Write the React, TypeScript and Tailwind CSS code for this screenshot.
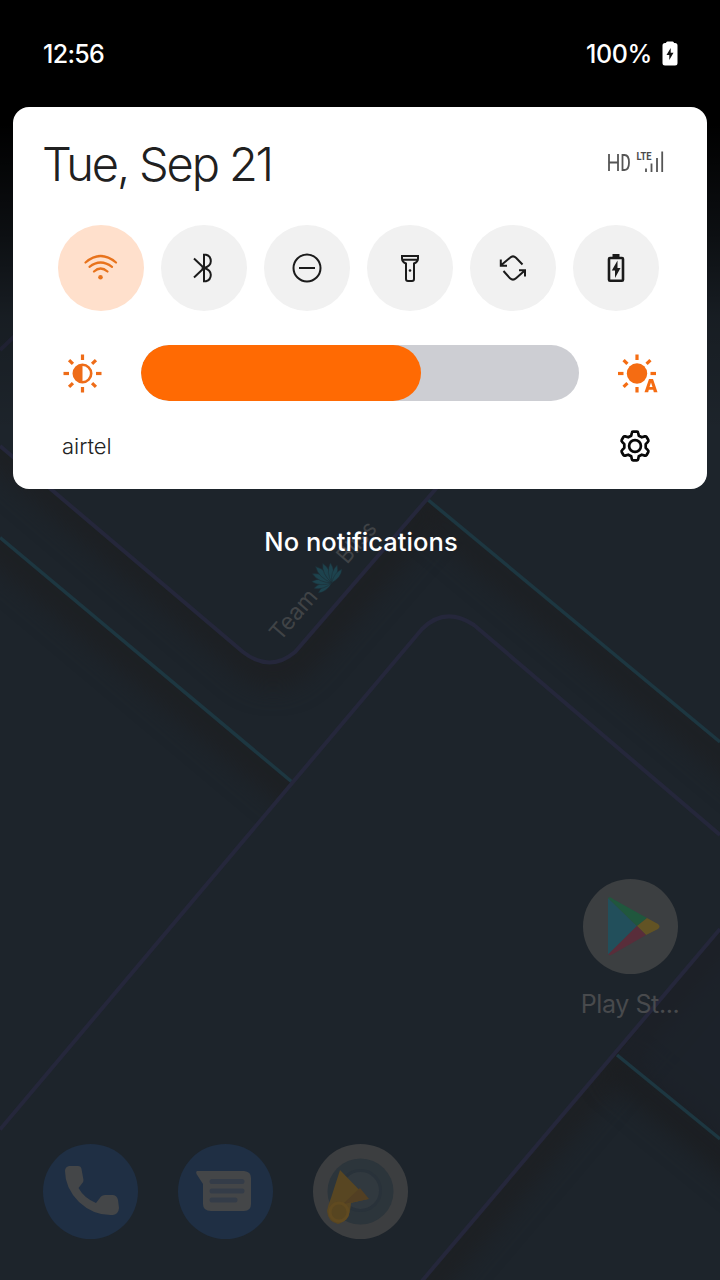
import React from "react";

const FONT = "font-['Inter','Open_Sans',sans-serif]";

function Wallpaper() {
  return (
    <svg className="absolute inset-0 h-full w-full" viewBox="0 0 720 1280" fill="none">
      <defs>
        <filter id="soft" x="-30%" y="-30%" width="160%" height="160%" colorInterpolationFilters="sRGB">
          <feGaussianBlur stdDeviation="13" />
        </filter>
        <linearGradient id="fade" x1="0" y1="0" x2="0" y2="1">
          <stop offset="0" stopColor="#000" />
          <stop offset="0.26" stopColor="#000" />
          <stop offset="0.48" stopColor="#000" stopOpacity="0.6" />
          <stop offset="0.66" stopColor="#000" stopOpacity="0.2" />
          <stop offset="0.9" stopColor="#000" stopOpacity="0" />
        </linearGradient>
        <clipPath id="leftBand"><path d="M0 537L292 782L0 1129Z" /></clipPath>
        <clipPath id="lowerRight"><path d="M720 929L422 1280H720Z" /></clipPath>
        <clipPath id="upper"><path d="M0 300H720V834L473 625Q450 605 422 628L292 782L0 537Z" /></clipPath>
      </defs>
      <rect width="720" height="1280" fill="#1d242b" />
      <g clipPath="url(#upper)">
        <path d="M-60 395L248 656Q271 673 294 653L440 486" stroke="#1d1f22" strokeWidth="30" filter="url(#soft)" transform="translate(4 8)" />
        <path d="M427 499L780 793" stroke="#1d1f22" strokeWidth="26" filter="url(#soft)" transform="translate(-4 8)" />
        <path d="M0 446L248 656Q271 673 294 653L440 486V300H0Z" fill="#1d242b" />
        <path d="M427 499L720 743V300H600Z" fill="#1d242b" />
      </g>
      <g clipPath="url(#leftBand)">
        <path d="M-60 487L330 814" stroke="#1d1f22" strokeWidth="30" filter="url(#soft)" transform="translate(-2 8)" />
      </g>
      <g clipPath="url(#lowerRight)">
        <path d="M770 870L382 1327" stroke="#1d1f22" strokeWidth="28" filter="url(#soft)" transform="translate(5 5)" />
        <path d="M617 1055L770 1180" stroke="#1b1d20" strokeWidth="28" filter="url(#soft)" transform="translate(-4 10)" />
        <path d="M617 1055L720 1139V929Z" fill="#1d222a" fillOpacity="0.6" />
      </g>
      <g stroke="#1d3741" strokeWidth="3.5">
        <path d="M0 537.500L292 782" />
        <path d="M427 499L720 742" />
        <path d="M617 1055L720 1139" />
      </g>
      <g stroke="#25273b" strokeWidth="4">
        <path d="M0 350L40 312" />
        <path d="M0 446L243 652Q270 673 295 652L440 484" />
        <path d="M0 1129.500L422 629Q445 606 474 625L720 835" />
        <path d="M720 929L422 1281" />
      </g>
      <g transform="translate(324 575)" fill="#1d434e">
        <g transform="rotate(-45) translate(0 11)">
          {[-82, -62, -41, -20, 0, 20, 41, 62, 82].map((a) => (
            <path key={a} d="M0 0Q-6 -13 0 -23Q6 -13 0 0Z" transform={`rotate(${a}) scale(${1 - Math.abs(a) / 320})`} stroke="#1d2c34" strokeWidth="0.600" />
          ))}
        </g>
      </g>
      <g className="font-['Inter',sans-serif]" fill="#404346" fontSize="23">
        <text transform="translate(280 642) rotate(-49)" textLength="59" lengthAdjust="spacingAndGlyphs">Team</text>
        <text transform="translate(347 565) rotate(-49)" textLength="47" lengthAdjust="spacingAndGlyphs">Bliss</text>
      </g>
      <rect width="720" height="480" fill="url(#fade)" />
    </svg>
  );
}

function Tile({ active, children }: { active?: boolean; children: React.ReactNode }) {
  return (
    <button className={`flex size-[86px] items-center justify-center rounded-full ${active ? "bg-[#ffe0cc] text-[#e8731c]" : "bg-[#f1f1f1] text-[#1b1b1b]"}`}>
      <svg className="size-[86px]" viewBox="0 0 86 86" fill="none" stroke="currentColor" strokeWidth="2">
        {children}
      </svg>
    </button>
  );
}

function Rays({ skip }: { skip?: number }) {
  return (
    <g fill="currentColor">
      {[0, 45, 90, 135, 180, 225, 270, 315].filter((a) => a !== skip).map((a) => (
        <rect key={a} x="-1.600" y="-19" width="3.200" height="5.500" transform={`rotate(${a})`} />
      ))}
    </g>
  );
}

function QuickSettings() {
  return (
    <section className="flex h-[382px] flex-col rounded-[16px] bg-white">
      <header className="flex h-[118px] items-center justify-between pr-[43px] pb-[4px] pl-[29px]">
        <h1 className="text-[47px] font-[330] tracking-[-2.150px] whitespace-nowrap text-[#202020]">Tue, Sep 21</h1>
        <svg className="mb-[4px] h-[30px] w-[58px]" viewBox="0 0 58 30">
          <g fill="none" stroke="#555" strokeWidth="1.800">
            <path d="M3 7V24M12 7V24M3 15.500H12M16.500 8V23H18.500Q23 23 23 15.500Q23 8 18.500 8Z" />
            <path d="M40 21.500V25M45.500 16.500V25M51 11V25M56.200 4.500V25" />
          </g>
          <text x="30.500" y="13" fontSize="11.500" fontWeight="700" textLength="15" lengthAdjust="spacingAndGlyphs" fill="#4b4b4b" className="font-['Roboto',sans-serif]">LTE</text>
        </svg>
      </header>
      <div className="flex justify-between pr-[48px] pl-[45px]">
        <Tile active>
          <g strokeWidth="2.200" strokeLinecap="round">
            <path d="M27.500 37.500Q42.500 24.500 58 37.500M31.500 41.800Q42.500 33.200 54 41.800M36 46.500Q42.500 40.500 49.500 46.500" />
            <circle cx="42.500" cy="52.300" r="2.300" fill="currentColor" stroke="none" />
          </g>
        </Tile>
        <Tile>
          <path d="M33 33.500L43 43L33 52.500M43 29.800V56.200H45Q49.800 55 49.800 49.800Q49.800 45 43 43Q49.800 41 49.800 36.200Q49.800 31 45 29.800Z" />
        </Tile>
        <Tile>
          <circle cx="43" cy="43" r="13.500" /><path d="M35 43H51" />
        </Tile>
        <Tile>
          <path d="M35 31H51V33.500Q51 37 47 38.500V54Q47 56 45 56H41Q39 56 39 54V38.500Q35 37 35 33.500ZM35.500 34.800H50.500" />
          <circle cx="43" cy="45.500" r="1.300" fill="currentColor" stroke="none" />
        </Tile>
        <Tile>
          <path d="M30.800 34.500V40.700H37M31 40.200L40 32.700Q43 30 46 32.700L52.500 39.500M55 51.500V45.300H49M54.500 45.800L46 53.300Q43 56 40 53.300L33.500 46" />
        </Tile>
        <Tile>
          <rect x="36" y="33" width="14" height="22.800" rx="1" strokeWidth="2.600" />
          <path d="M39.500 29H46.500V33H39.500Z" fill="currentColor" stroke="none" />
          <path d="M44.500 35.500L38.800 45.500H42V53L47.500 43H44.500Z" fill="currentColor" stroke="none" />
        </Tile>
      </div>
      <div className="mt-[34px] flex h-[56px] items-center pl-[50px]">
        <svg className="size-[40px] text-[#ee6c18]" viewBox="-19.500 -20.500 40 40">
          <Rays />
          <circle r="8.700" fill="none" stroke="currentColor" strokeWidth="2.600" />
          <path d="M0 -9A9 9 0 0 0 0 9Z" fill="currentColor" />
        </svg>
        <div className="ml-[38px] h-[56px] w-[438px] overflow-hidden rounded-full bg-[#cdced3]">
          <div className="h-full w-[280px] rounded-full bg-[#ff6a03]" />
        </div>
        <svg className="ml-[38px] size-[44px] text-[#f56c12]" viewBox="-20 -22.500 44 44">
          <Rays skip={135} />
          <circle r="10.200" fill="currentColor" />
          <path d="M4 20L11 4H17L22 20Z" fill="#fff" />
          <path fillRule="evenodd" d="M7.500 18.800L12 5.500H16L20.500 18.800H16.800L16.200 16.300H11.800L11.200 18.800ZM12.500 13.500H15.500L14 9Z" fill="currentColor" />
        </svg>
      </div>
      <footer className="mt-[22px] flex h-[46px] items-center justify-between pr-[54px] pl-[49px]">
        <span className="text-[22px] font-[350] text-[#222]">airtel</span>
        <svg className="size-[36px]" viewBox="-18 -18 36 36" fill="none" stroke="#080808" strokeWidth="2.700" strokeLinejoin="round">
          <circle r="5.900" />
          <path d="M-2 -14.300H2Q3 -14.300 3.200 -13L3.800 -10.300L6.800 -8.700L9.800 -9.600Q11 -9.900 11.600 -9L13.300 -6Q13.800 -5 12.900 -4.200L10.700 -1.800V1.800L12.900 4.200Q13.800 5 13.300 6L11.600 9Q11 9.900 9.800 9.600L6.800 8.700L3.800 10.300L3.200 13Q3 14.300 2 14.300H-2Q-3 14.300 -3.200 13L-3.800 10.300L-6.800 8.700L-9.800 9.600Q-11 9.900 -11.600 9L-13.300 6Q-13.800 5 -12.900 4.200L-10.700 1.800V-1.800L-12.900 -4.200Q-13.800 -5 -13.300 -6L-11.600 -9Q-11 -9.900 -9.800 -9.600L-6.800 -8.700L-3.800 -10.300L-3.200 -13Q-3 -14.300 -2 -14.300Z" />
        </svg>
      </footer>
    </section>
  );
}

function PlayStore() {
  return (
    <div className="flex w-[120px] flex-col items-center">
      <svg className="size-[95px]" viewBox="0 0 95 95">
        <circle cx="47.500" cy="47.500" r="47.500" fill="#3c3f41" />
        <path d="M25 19V76L54 47Z" fill="#224f5b" />
        <path d="M25 19Q27 17 30 20L64 39L54 47Z" fill="#20573d" />
        <path d="M64 39L75 45Q78 47.500 75 50L63 56L54 47Z" fill="#625324" />
        <path d="M54 47L63 56L30 75Q27 77 25 75.500Z" fill="#592d3a" />
      </svg>
      <span className="mt-[11px] text-[25px] leading-[38px] tracking-[-0.400px] whitespace-nowrap text-[#484a4d]">Play St...</span>
    </div>
  );
}

function Dock() {
  return (
    <nav className="flex gap-[40px] pl-[43px]">
      <svg className="size-[95px]" viewBox="0 0 95 95">
        <circle cx="47.500" cy="47.500" r="47.500" fill="#1f2f44" />
        <path d="M26 22H35Q38 22 38.500 25L40.500 36Q40.500 38 39 39.500L35.500 44Q41 54 53 59L58 52.500Q59.500 51 62 51H70Q74 51.500 75 56L76 64Q75.500 70 70 71Q51 72 36 58Q22 44 22 27Q22 23 26 22Z" fill="#444648" />
      </svg>
      <svg className="size-[95px]" viewBox="0 0 95 95">
        <circle cx="47.500" cy="47.500" r="47.500" fill="#1f2f44" />
        <path d="M19 27H66Q73 27.500 73 34V60Q73 67 66 67H33Q25 67 25 60V40L18.500 30Q17.500 27.500 19 27Z" fill="#444648" />
        <path d="M34 37.500H64M34 47H64M34 56H57" stroke="#343c48" strokeWidth="5" strokeLinecap="round" />
      </svg>
      <svg className="size-[95px]" viewBox="0 0 95 95">
        <circle cx="47.500" cy="47.500" r="47.500" fill="#3c3e40" />
        <circle cx="47.500" cy="47.500" r="33" fill="#2c353b" />
        <circle cx="47.500" cy="46.500" r="20" fill="#31393f" stroke="#29323a" strokeWidth="3" />
        <path d="M27 26L55 55L38 59Q37 77 25 80Q15 78 14 67Q15 61 18 54Z" fill="#584622" />
        <path d="M47 44L56 55L30 60Z" fill="#523f23" />
        <circle cx="26" cy="68" r="9" fill="#574520" stroke="#604a20" strokeWidth="3" />
      </svg>
    </nav>
  );
}

export default function App() {
  return (
    <main className={`relative h-[1280px] w-[720px] overflow-hidden bg-[#1d242b] ${FONT}`}>
      <Wallpaper />
      <div className="relative flex h-full flex-col">
        <div className="flex h-[107px] items-center justify-between pr-[42px] pl-[43px] text-[25px] font-medium text-white">
          <span className="pt-[2px] tracking-[-0.700px]">12:56</span>
          <div className="flex items-center gap-[10px]">
            <span className="pt-[2px] tracking-[-0.350px]">100%</span>
            <svg className="h-[25px] w-[16px]" viewBox="0 0 16 25">
              <path d="M4 2Q4 0.500 5.500 0.500H10.500Q12 0.500 12 2H13Q15.500 2 15.500 4.500V22Q15.500 24.500 13 24.500H3Q0.500 24.500 0.500 22V4.500Q0.500 2 3 2Z" fill="#fff" />
              <path d="M8.700 7L4.500 14H7.300V19L11.500 11.800H8.700Z" fill="#111" />
            </svg>
          </div>
        </div>
        <div className="px-[13px]"><QuickSettings /></div>
        <p className="mt-[34px] pl-[2px] text-center text-[25.500px] leading-[38px] font-medium tracking-[0.050px] text-white">No notifications</p>
        <div className="mt-[318px] flex justify-end pr-[30px]"><PlayStore /></div>
        <div className="mt-[121px]"><Dock /></div>
      </div>
    </main>
  );
}
